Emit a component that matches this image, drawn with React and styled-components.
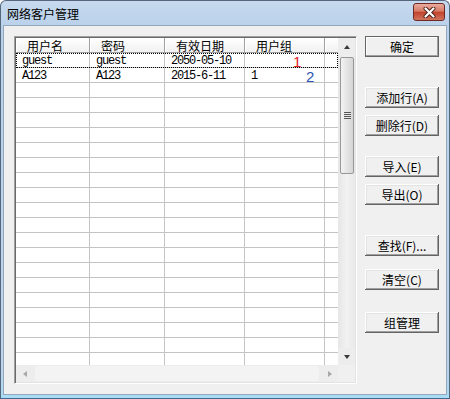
import React from "react";
import styled, { createGlobalStyle } from "styled-components";

const CJK = `"Noto Sans CJK SC", "Liberation Sans", sans-serif`;
const MONO = `"Liberation Mono", "Noto Sans CJK SC", monospace`;

const GlobalStyle = createGlobalStyle`
  html, body {
    margin: 0;
    padding: 0;
    background: #fff;
  }
  body {
    font-family: ${CJK};
    font-size: 12px;
  }
`;

const columns = ["用户名", "密码", "有效日期", "用户组"];

const users = [
  { name: "guest", pass: "guest", date: "2050-05-10", group: "" },
  { name: "A123", pass: "A123", date: "2015-6-11", group: "1" },
];

const buttons = [
  { label: "确定", top: 0, isDefault: true },
  { label: "添加行(A)", top: 30 },
  { label: "删除行(D)", top: 7 },
  { label: "导入(E)", top: 20 },
  { label: "导出(O)", top: 7 },
  { label: "查找(F)...", top: 30 },
  { label: "清空(C)", top: 13 },
  { label: "组管理", top: 22 },
];

function App() {
  const rows = [...users];
  while (rows.length < 22) rows.push(null);

  return (
    <>
      <GlobalStyle />
      <Window>
        <TitleBar>
          <Title>网络客户管理</Title>
          <CloseButton>
            <svg width="13" height="11" viewBox="0 0 13 11">
              <path d="M2.5 1.5 L10.5 9.5 M10.5 1.5 L2.5 9.5" stroke="#4a1f1a" strokeWidth="4" strokeLinecap="round" />
              <path d="M2.5 1.5 L10.5 9.5 M10.5 1.5 L2.5 9.5" stroke="#fff" strokeWidth="2.2" strokeLinecap="round" />
            </svg>
          </CloseButton>
        </TitleBar>
        <Client>
          <ListView>
            <ListContent>
              <HeaderRow>
                {columns.map((c) => (
                  <HeaderCell key={c}>{c}</HeaderCell>
                ))}
                <HeaderCell $filler />
              </HeaderRow>
              <Body>
                {rows.map((r, i) => (
                  <Row key={i} $focused={i === 0}>
                    <Cell>{r && r.name}</Cell>
                    <Cell>{r && r.pass}</Cell>
                    <Cell>{r && r.date}</Cell>
                    <Cell>{r && r.group}</Cell>
                    <Cell $filler />
                  </Row>
                ))}
              </Body>
            </ListContent>
            <VScroll>
              <ArrowBox>
                <Arrow $dir="up" />
              </ArrowBox>
              <VTrack>
                <Thumb>
                  <Grip />
                </Thumb>
              </VTrack>
              <ArrowBox>
                <Arrow $dir="down" />
              </ArrowBox>
            </VScroll>
            <HScroll>
              <ArrowBox>
                <Arrow $dir="left" />
              </ArrowBox>
              <HTrack />
              <ArrowBox>
                <Arrow $dir="right" />
              </ArrowBox>
            </HScroll>
            <Corner />
          </ListView>
          <ButtonColumn>
            {buttons.map((b) => (
              <Button key={b.label} $top={b.top} $default={b.isDefault}>
                {b.label}
              </Button>
            ))}
          </ButtonColumn>
        </Client>
        <Note $color="#e0201c" $left={292} $top={53}>
          1
        </Note>
        <Note $color="#2a56b0" $left={305} $top={68}>
          2
        </Note>
      </Window>
    </>
  );
}

const Window = styled.div`
  position: relative;
  width: 450px;
  height: 399px;
  box-sizing: border-box;
  display: flex;
  flex-direction: column;
  border: 1px solid #55677c;
  border-bottom-color: #3f6a8f;
  border-radius: 6px 6px 0 0;
  background: linear-gradient(#c6d9ee, #b9d1ea 26px, #bcd3ea 370px, #a9dcf5);
  padding: 0 2px 3px;
  overflow: hidden;
`;

const TitleBar = styled.div`
  height: 24px;
  display: flex;
  align-items: flex-start;
  justify-content: space-between;
  padding-left: 4px;
`;

const Title = styled.div`
  font-family: ${CJK};
  font-size: 12px;
  line-height: 26px;
  color: #000;
`;

const CloseButton = styled.div`
  width: 32px;
  height: 18px;
  margin-top: 2px;
  margin-right: 2px;
  box-sizing: border-box;
  border: 1px solid #6e2a22;
  border-radius: 3px;
  background: linear-gradient(#e9ab9d, #d77a66 45%, #c2432c 52%, #d0745e);
  display: flex;
  align-items: center;
  justify-content: center;
`;

const Client = styled.div`
  flex: 1;
  display: flex;
  gap: 8px;
  padding: 10px 0 0 10px;
  background: #f0f0f0;
  border: 1px solid #93a7bd;
`;

const ListView = styled.div`
  width: 343px;
  height: 348px;
  box-sizing: border-box;
  padding: 1px;
  border: 1px solid;
  border-color: #a0a0a0 #fff #fff #a0a0a0;
  box-shadow: inset 1px 1px #696969, inset -1px -1px #e3e3e3;
  display: grid;
  grid-template-columns: 1fr 17px;
  grid-template-rows: 1fr 17px;
`;

const ListContent = styled.div`
  background: #fff;
  overflow: hidden;
  display: flex;
  flex-direction: column;
`;

const gridCols = "74px 75px 80px 80px 1fr";

const HeaderRow = styled.div`
  display: grid;
  grid-template-columns: ${gridCols};
  height: 15px;
  flex-shrink: 0;
`;

const HeaderCell = styled.div`
  box-sizing: border-box;
  height: 15px;
  padding-left: 11px;
  font-family: ${CJK};
  font-size: 12px;
  line-height: 15px;
  color: #000;
  background: linear-gradient(#ffffff, #f1f1f1);
  border-bottom: 1px solid #a0a0a0;
  border-right: ${(p) => (p.$filler ? "none" : "1px solid #a0a0a0")};
  box-shadow: inset 1px 0 #fff;
  white-space: nowrap;
`;

const Body = styled.div`
  flex: 1;
  overflow: hidden;
`;

const Row = styled.div`
  display: grid;
  grid-template-columns: ${gridCols};
  height: 15px;
  box-sizing: border-box;
  border-bottom: 1px solid #c4c4c4;
  outline: ${(p) => (p.$focused ? "1px dotted #000" : "none")};
  outline-offset: -1px;
  position: relative;
`;

const Cell = styled.div`
  box-sizing: border-box;
  padding: 2px 0 0 6px;
  font-family: ${MONO};
  font-size: 12px;
  letter-spacing: -1.2px;
  line-height: 13px;
  color: #000;
  border-right: ${(p) => (p.$filler ? "none" : "1px solid #c4c4c4")};
  white-space: nowrap;
`;

const VScroll = styled.div`
  display: flex;
  flex-direction: column;
  background: #ededed;
`;

const HScroll = styled.div`
  display: flex;
  background: #ededed;
`;

const Corner = styled.div`
  background: #f0f0f0;
`;

const ArrowBox = styled.div`
  width: 17px;
  height: 17px;
  flex-shrink: 0;
  display: flex;
  align-items: center;
  justify-content: center;
`;

const arrowShapes = {
  up: "border-left: 3.5px solid transparent; border-right: 3.5px solid transparent; border-bottom: 4px solid #3a3a3a;",
  down: "border-left: 3.5px solid transparent; border-right: 3.5px solid transparent; border-top: 4px solid #3a3a3a;",
  left: "border-top: 3.5px solid transparent; border-bottom: 3.5px solid transparent; border-right: 4px solid #a8a8a8;",
  right: "border-top: 3.5px solid transparent; border-bottom: 3.5px solid transparent; border-left: 4px solid #a8a8a8;",
};

const Arrow = styled.div`
  width: 0;
  height: 0;
  ${(p) => arrowShapes[p.$dir]}
`;

const VTrack = styled.div`
  flex: 1;
  background: linear-gradient(90deg, #e6e6e6, #f2f2f2 50%, #e9e9e9);
`;

const Thumb = styled.div`
  margin: 2px 1px 0 2px;
  height: 117px;
  box-sizing: border-box;
  border: 1px solid #979797;
  border-radius: 2px;
  background: linear-gradient(90deg, #f3f3f3, #e4e4e4 50%, #d6d6d6);
  display: flex;
  align-items: center;
  justify-content: center;
`;

const Grip = styled.div`
  width: 7px;
  height: 7px;
  background: repeating-linear-gradient(#555 0 1px, #e8e8e8 1px 2px);
`;

const HTrack = styled.div`
  flex: 1;
  margin: 1px 2px;
  background: #f3f3f3;
  border-radius: 2px;
`;

const ButtonColumn = styled.div`
  display: flex;
  flex-direction: column;
  width: 74px;
`;

const Button = styled.button`
  height: 21px;
  margin-top: ${(p) => p.$top}px;
  padding: 0;
  border: none;
  background: #f0f0f0;
  font-family: ${CJK};
  font-size: 12px;
  line-height: 20px;
  color: #000;
  box-shadow: ${(p) =>
    p.$default
      ? "inset 0 0 0 1px #646464, inset -2px -2px #a0a0a0, inset 2px 2px #fff"
      : "inset -1px -1px #646464, inset 1px 1px #fff, inset -2px -2px #a0a0a0, inset 2px 2px #e3e3e3"};
`;

const Note = styled.div`
  position: absolute;
  left: ${(p) => p.$left}px;
  top: ${(p) => p.$top}px;
  font-family: "Liberation Sans", sans-serif;
  font-size: 15px;
  line-height: 16px;
  color: ${(p) => p.$color};
`;

export default App;
